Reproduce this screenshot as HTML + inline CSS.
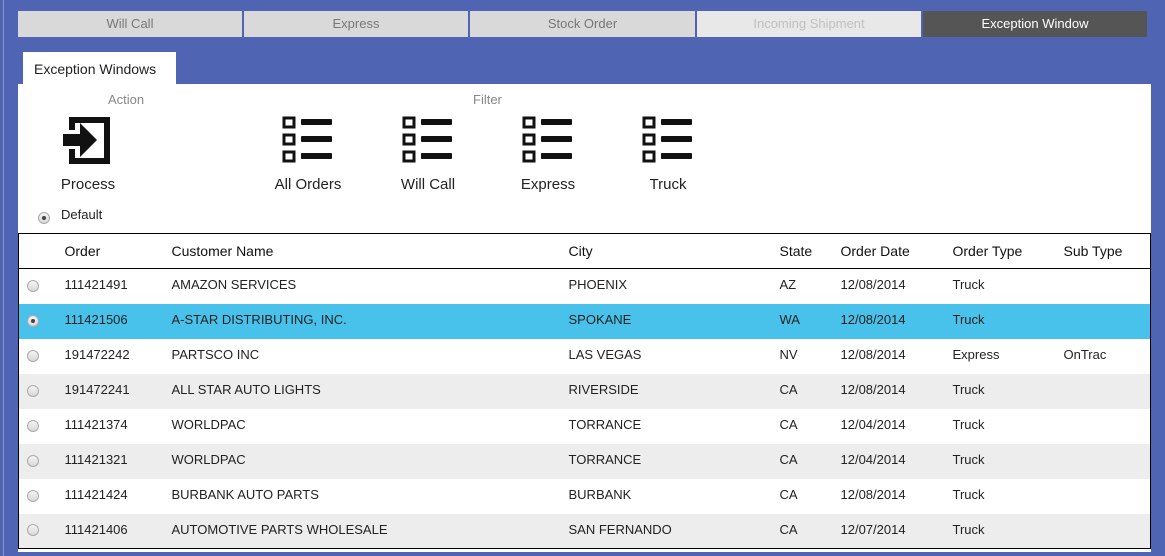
<!DOCTYPE html>
<html><head><style>
*{margin:0;padding:0;box-sizing:border-box}
body{width:1165px;height:556px;background:#5064b4;font-family:"Liberation Sans",sans-serif;position:relative;overflow:hidden}
.vl{position:absolute;left:3px;top:0;width:1px;height:556px;background:#8a96cc}
.tab{position:absolute;top:11px;height:26px;background:#d9d9d9;color:#777;font-size:13px;text-align:center;line-height:26px}
.panel{position:absolute;left:18px;top:84px;width:1133px;height:468px;background:#fff}
.ew{position:absolute;left:23px;top:52px;width:153px;height:33px;background:#fff;font-size:14px;color:#222;padding:9px 0 0 11px}
.lbl{position:absolute;font-size:13px;color:#888}
.cap{position:absolute;font-size:15px;color:#222;text-align:center;width:120px}
.ico{position:absolute}
table{position:absolute;left:18px;top:233px;width:1133px;border:1px solid #000;border-collapse:collapse;font-size:13px;color:#222}
th{font-weight:normal;text-align:left;height:35px;border-bottom:1px solid #000;font-size:14px;color:#111}
td{height:35px;padding-bottom:3px}
tr.g td{background:#ededed}
tr.s td{background:#48c2eb}
.r{display:inline-block;width:12px;height:12px;border-radius:50%;border:1px solid #aaa;background:linear-gradient(#f4f4f4,#d8d8d8);margin-left:8px;vertical-align:middle;position:relative}
.r.on::after{content:"";position:absolute;left:3px;top:3px;width:4px;height:4px;border-radius:50%;background:#444}
</style></head><body>
<div class="vl"></div>
<div class="tab" style="left:18px;width:224px">Will Call</div>
<div class="tab" style="left:244px;width:224px">Express</div>
<div class="tab" style="left:470px;width:225px">Stock Order</div>
<div class="tab" style="left:697px;width:224px;background:#e8e8e8;color:#c0c0c0">Incoming Shipment</div>
<div class="tab" style="left:923px;width:224px;background:#555;color:#fff">Exception Window</div>
<div class="panel"></div>
<div class="ew">Exception Windows</div>
<div class="lbl" style="left:108px;top:92px">Action</div>
<div class="lbl" style="left:473px;top:92px">Filter</div>
<svg class="ico" style="left:60px;top:115px" width="54" height="52" viewBox="0 0 54 52"><path d="M9 2H50V49H9V34H15V43H44V8H15V15H9Z" fill="#111"/><path d="M3 19H20V8L37 25L20 42V31H3Z" fill="#111"/></svg>
<div class="cap" style="left:28px;top:176px">Process</div>
<div style="position:absolute;left:38px;top:209px"><span class="r on" style="margin:0"></span></div>
<div style="position:absolute;left:61px;top:207px;font-size:13px;color:#222">Default</div>
<svg width="0" height="0" style="position:absolute"><defs><g id="L"><rect x="2" y="2" width="10" height="9" fill="none" stroke="#111" stroke-width="3"/><rect x="2" y="19" width="10" height="9" fill="none" stroke="#111" stroke-width="3"/><rect x="2" y="36" width="10" height="9" fill="none" stroke="#111" stroke-width="3"/><rect x="19" y="3" width="31" height="6" rx="1" fill="#111"/><rect x="19" y="20" width="31" height="6" rx="1" fill="#111"/><rect x="19" y="37" width="31" height="6" rx="1" fill="#111"/></g></defs></svg>
<svg class="ico" style="left:282px;top:116px" width="52" height="48"><use href="#L"/></svg>
<svg class="ico" style="left:402px;top:116px" width="52" height="48"><use href="#L"/></svg>
<svg class="ico" style="left:522px;top:116px" width="52" height="48"><use href="#L"/></svg>
<svg class="ico" style="left:642px;top:116px" width="52" height="48"><use href="#L"/></svg>
<div class="cap" style="left:248px;top:176px">All Orders</div>
<div class="cap" style="left:368px;top:176px">Will Call</div>
<div class="cap" style="left:488px;top:176px">Express</div>
<div class="cap" style="left:608px;top:176px">Truck</div>
<table>
<colgroup><col style="width:46px"><col style="width:107px"><col style="width:397px"><col style="width:211px"><col style="width:61px"><col style="width:112px"><col style="width:111px"><col></colgroup>
<tr><th></th><th>Order</th><th>Customer Name</th><th>City</th><th>State</th><th>Order Date</th><th>Order Type</th><th>Sub Type</th></tr>
<tr><td><span class="r"></span></td><td>111421491</td><td>AMAZON SERVICES</td><td>PHOENIX</td><td>AZ</td><td>12/08/2014</td><td>Truck</td><td></td></tr>
<tr class="s"><td><span class="r on"></span></td><td>111421506</td><td>A-STAR DISTRIBUTING, INC.</td><td>SPOKANE</td><td>WA</td><td>12/08/2014</td><td>Truck</td><td></td></tr>
<tr><td><span class="r"></span></td><td>191472242</td><td>PARTSCO INC</td><td>LAS VEGAS</td><td>NV</td><td>12/08/2014</td><td>Express</td><td>OnTrac</td></tr>
<tr class="g"><td><span class="r"></span></td><td>191472241</td><td>ALL STAR AUTO LIGHTS</td><td>RIVERSIDE</td><td>CA</td><td>12/08/2014</td><td>Truck</td><td></td></tr>
<tr><td><span class="r"></span></td><td>111421374</td><td>WORLDPAC</td><td>TORRANCE</td><td>CA</td><td>12/04/2014</td><td>Truck</td><td></td></tr>
<tr class="g"><td><span class="r"></span></td><td>111421321</td><td>WORLDPAC</td><td>TORRANCE</td><td>CA</td><td>12/04/2014</td><td>Truck</td><td></td></tr>
<tr><td><span class="r"></span></td><td>111421424</td><td>BURBANK AUTO PARTS</td><td>BURBANK</td><td>CA</td><td>12/08/2014</td><td>Truck</td><td></td></tr>
<tr class="g"><td><span class="r"></span></td><td>111421406</td><td>AUTOMOTIVE PARTS WHOLESALE</td><td>SAN FERNANDO</td><td>CA</td><td>12/07/2014</td><td>Truck</td><td></td></tr>
</table>
</body></html>
